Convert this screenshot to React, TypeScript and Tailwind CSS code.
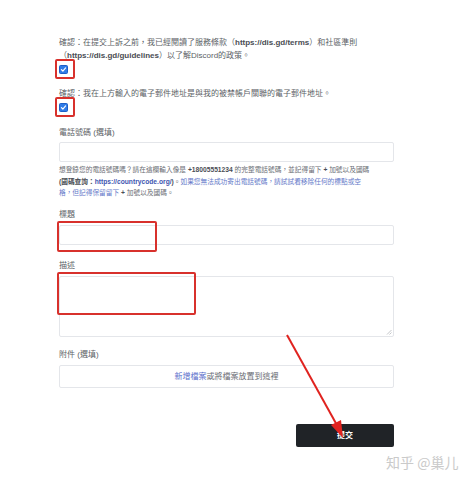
import React from 'react';

const font = { fontFamily: '"Liberation Sans", "Noto Sans CJK TC", sans-serif' };

const CheckBox: React.FC = () => (
  <span className="flex h-[9px] w-[9px] items-center justify-center rounded-[1.5px] border border-[#1d5fc7] bg-[#2f7be6]">
    <svg viewBox="0 0 10 10" className="h-[7px] w-[7px]" fill="none">
      <path d="M2 5.2 L4.1 7.2 L8 2.8" stroke="white" strokeWidth="1.7" strokeLinecap="round" strokeLinejoin="round" />
    </svg>
  </span>
);

const Label: React.FC<{ children: React.ReactNode; className?: string }> = ({ children, className }) => (
  <div className={`text-[8px] leading-[12px] text-[#5c5f66] ${className ?? ''}`}>{children}</div>
);

export default function App() {
  return (
    <div className="relative h-[480px] w-[474px] overflow-hidden bg-white" style={font}>
      <div className="ml-[59px] flex w-[335px] flex-col pt-[37px]">
        {/* terms confirmation */}
        <p className="whitespace-nowrap text-[8px] leading-[12.5px] text-[#5c5f66]">
          確認：在提交上訴之前，我已經閱讀了服務條款（<b className="text-[#4a4d54]">https://dis.gd/terms</b>）和社區準則
          <br />
          （<b className="text-[#4a4d54]">https://dis.gd/guidelines</b>）以了解Discord的政策。
        </p>
        <div className="mt-[3px]">
          <CheckBox />
        </div>

        <p className="mt-[14px] whitespace-nowrap text-[8px] leading-[12px] text-[#5c5f66]">
          確認：我在上方輸入的電子郵件地址是與我的被禁帳戶關聯的電子郵件地址。
        </p>
        <div className="mt-[3px]">
          <CheckBox />
        </div>

        {/* phone */}
        <Label className="mt-[15px]">電話號碼 (選填)</Label>
        <div className="mt-[3px] h-[20px] rounded-[2px] border border-[#e4e6ea]" />
        <div className="mt-[2px] text-[6.7px] leading-[11.7px] text-[#6a6d74]">
          <span className="block whitespace-nowrap">
            想登錄您的電話號碼嗎？請在這欄輸入像是 <b className="text-[#4a4d54]">+18005551234</b> 的完整電話號碼，並記得留下 <b className="text-[#4a4d54]">+</b> 加號以及國碼
          </span>
          <span className="block whitespace-nowrap">
            <b className="text-[#4a4d54]">
              (國碼查詢：<span className="text-[#3d55b0]">https://countrycode.org/</span>)
            </b>
            。<span className="text-[#6579c9]">如果您無法成功寄出電話號碼，請試試看移除任何的標點或空</span>
          </span>
          <span className="block whitespace-nowrap">
            <span className="text-[#6579c9]">格，但記得保留留下</span> <b className="text-[#4a4d54]">+</b> 加號以及國碼。
          </span>
        </div>

        {/* title */}
        <Label className="mt-[10px]">標題</Label>
        <div className="mt-[4px] h-[20px] rounded-[2px] border border-[#e4e6ea]" />

        {/* description */}
        <Label className="mt-[15px]">描述</Label>
        <div className="relative mt-[4px]">
          <textarea className="block h-[61px] w-full resize-none rounded-[2px] border border-[#e4e6ea] outline-none" />
          <svg className="absolute bottom-[2px] right-[2px] h-[6px] w-[6px]" viewBox="0 0 6 6">
            <path d="M1 5.5 L5.5 1 M3.5 5.5 L5.5 3.5" stroke="#b5b7bb" strokeWidth="0.8" />
          </svg>
        </div>

        {/* attachments */}
        <Label className="mt-[12px]">附件 (選填)</Label>
        <div className="mt-[4px] flex h-[23px] items-center justify-center rounded-[2px] border border-[#e4e6ea] text-[8px] text-[#6a6d74]">
          <span className="text-[#5b6fcb]">新增檔案</span>或將檔案放置到這裡
        </div>

        <div className="mt-[36px] flex justify-end">
          <button className="h-[23px] w-[98px] rounded-[2px] bg-[#202327] text-[8px] font-bold text-white">提交</button>
        </div>
      </div>

      {/* red annotations */}
      <div className="absolute left-[55px] top-[59px] h-[20px] w-[20px] rounded-[2px] border-2 border-[#d8312c]" />
      <div className="absolute left-[55px] top-[97px] h-[20px] w-[20px] rounded-[2px] border-2 border-[#d8312c]" />
      <div className="absolute left-[57px] top-[221px] h-[31px] w-[100px] rounded-[2px] border-2 border-[#d8312c]" />
      <div className="absolute left-[57px] top-[272px] h-[43px] w-[139px] rounded-[2px] border-2 border-[#d8312c]" />

      <svg className="absolute left-0 top-0 h-[480px] w-[474px]" viewBox="0 0 474 480">
        <line x1="287" y1="335" x2="338" y2="427" stroke="#e0231f" strokeWidth="2" />
        <polygon points="343,438 331,425 341,420" fill="#e0231f" />
      </svg>

      <div
        className="absolute left-[386px] top-[454px] whitespace-nowrap text-[14px] leading-[16px] text-[#cacaca]"
        style={{ fontFamily: '"Noto Sans CJK SC", sans-serif' }}
      >
        知乎 @巢儿
      </div>
    </div>
  );
}
